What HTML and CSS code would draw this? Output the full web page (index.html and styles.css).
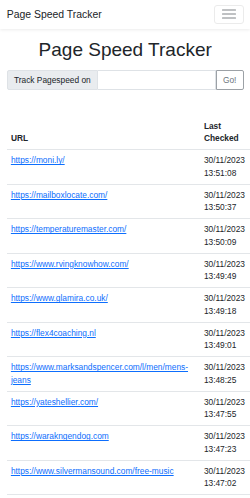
FILE: index.html
```html
<!DOCTYPE html>
<html lang="en">
<head>
    <meta charset="UTF-8">
    <title>Page Speed Tracker</title>
    <link rel="stylesheet" href="styles.css">
</head>
<body>

<nav class="navbar">
    <a class="brand" href="#">Page Speed Tracker</a>
    <button class="toggler" type="button" aria-label="Toggle navigation">
        <svg width="14" height="10" viewBox="0 0 14 10">
            <path d="M0.5 1H13.5M0.5 5H13.5M0.5 9H13.5" stroke="#808488" stroke-width="1.1" stroke-linecap="round"/>
        </svg>
    </button>
</nav>

<main class="container">
    <h1 class="title">Page Speed Tracker</h1>

    <form class="track-form" onsubmit="return false;">
        <span class="prefix">Track Pagespeed on</span>
        <input type="text" id="url">
        <button type="submit" class="btn-go">Go!</button>
    </form>

    <table class="sites">
        <thead>
            <tr>
                <th class="col-url">URL</th>
                <th class="col-date">Last Checked</th>
            </tr>
        </thead>
        <tbody>
            <tr><td><a href="#">https://moni.ly/</a></td><td>30/11/2023<br>13:51:08</td></tr>
            <tr><td><a href="#">https://mailboxlocate.com/</a></td><td>30/11/2023<br>13:50:37</td></tr>
            <tr><td><a href="#">https://temperaturemaster.com/</a></td><td>30/11/2023<br>13:50:09</td></tr>
            <tr><td><a href="#">https://www.rvingknowhow.com/</a></td><td>30/11/2023<br>13:49:49</td></tr>
            <tr><td><a href="#">https://www.glamira.co.uk/</a></td><td>30/11/2023<br>13:49:18</td></tr>
            <tr><td><a href="#">https://flex4coaching.nl</a></td><td>30/11/2023<br>13:49:01</td></tr>
            <tr><td><a href="#">https://www.marksandspencer.com/l/men/mens-jeans</a></td><td>30/11/2023<br>13:48:25</td></tr>
            <tr><td><a href="#">https://yateshellier.com/</a></td><td>30/11/2023<br>13:47:55</td></tr>
            <tr><td><a href="#">https://warakngendog.com</a></td><td>30/11/2023<br>13:47:23</td></tr>
            <tr><td><a href="#">https://www.silvermansound.com/free-music</a></td><td>30/11/2023<br>13:47:02</td></tr>
        </tbody>
    </table>
</main>

</body>
</html>
```

FILE: styles.css
```css
body { margin: 0; font-family: "Liberation Sans", Arial, sans-serif; font-size: 8.35px; line-height: 12.5px; color: #212529; background: #fff; }

.navbar { height: 29px; display: flex; align-items: center; justify-content: space-between; padding: 0 6.3px 0 6.7px; background: #fff; box-shadow: 0 1px 3px rgba(0,0,0,0.08); position: relative; }
.brand { font-size: 10.45px; color: #212529; text-decoration: none; margin-top: 1px; }
.toggler { width: 30px; height: 19.3px; padding: 0; border: 1px solid #ebebeb; border-radius: 3px; background: #fff; display: flex; align-items: center; justify-content: center; }
.toggler svg { display: block; }

.container { padding: 0 6.3px 0 6.7px; }
.title { margin: 10px 0 8px; font-size: 19px; line-height: 22.8px; font-weight: normal; text-align: center; }

.track-form { display: flex; height: 20.3px; margin: 0; }
.prefix { display: flex; align-items: center; padding: 0 6.3px; background: #e9ecef; border: 1px solid #dee2e6; border-radius: 2px 0 0 2px; white-space: nowrap; }
.track-form input { flex: 1; min-width: 0; margin: 0; padding: 0 6px; border: 1px solid #dee2e6; border-left: 0; font: inherit; }
.btn-go { margin: 0; padding: 0 6.3px; border: 1px solid #9ca1a6; border-radius: 0 2px 2px 0; background: #fff; color: #6c757d; font: inherit; }

.sites { width: 243px; margin-top: 25.5px; border-collapse: collapse; table-layout: fixed; }
.sites th, .sites td { box-sizing: border-box; padding: 4.25px 4.2px; border-bottom: 1px solid #e3e6e9; text-align: left; vertical-align: top; }
.sites thead th { vertical-align: bottom; font-weight: bold; }
.col-url { width: 193px; }
.col-date { width: 50px; }
.sites a { color: #0d6efd; text-decoration: underline; }
```
